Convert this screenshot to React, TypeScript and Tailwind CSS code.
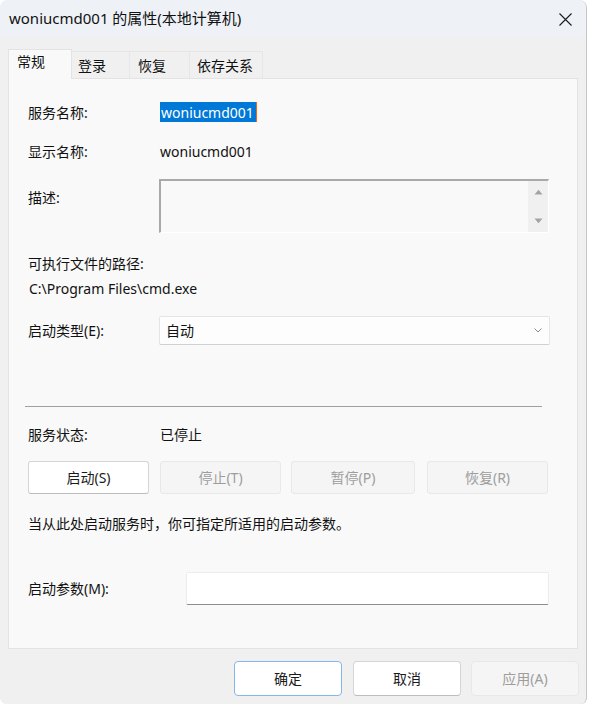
import React from "react";

const font = { fontFamily: '"Noto Sans", "Noto Sans CJK SC", sans-serif' };

function Row({ label, children, className = "" }: { label: string; children?: React.ReactNode; className?: string }) {
  return (
    <div className={`flex items-center ${className}`}>
      <div className="w-[132px] shrink-0">{label}</div>
      {children}
    </div>
  );
}

function ActionButton({ label, enabled, w, className = "" }: { label: string; enabled?: boolean; w: string; className?: string }) {
  return (
    <div
      className={`${w} h-[33px] flex items-center justify-center rounded-[3px] border ${
        enabled
          ? "bg-white border-[#d5d5d5] border-b-[#bdbdbd] text-[#1a1a1a]"
          : "bg-[#f5f5f5] border-[#e8e8e8] text-[#9d9d9d]"
      } ${className}`}
    >
      {label}
    </div>
  );
}

export default function App() {
  return (
    <div className="w-[589px] h-[705px] bg-white text-[14px] text-[#111]" style={font}>
      <div className="w-[587px] h-[704px] flex flex-col rounded-t-[8px] rounded-b-[6px] overflow-hidden border-r border-[#c6c6c6] bg-[#f0f0f0]">
        {/* Title bar */}
        <div className="h-[37px] shrink-0 bg-[#eef2f7] flex items-center pl-[9px] pr-[14px]">
          <div className="flex-1 text-[15px] text-[#111] -mt-[1px]">woniucmd001 的属性(本地计算机)</div>
          <svg width="13" height="13" viewBox="0 0 13 13" className="mt-[1px]">
            <path d="M0.5 0.5 L12.5 12.5 M12.5 0.5 L0.5 12.5" stroke="#1a1a1a" strokeWidth="1.1" fill="none" />
          </svg>
        </div>

        {/* Tabs */}
        <div className="flex items-end ml-[8px] mt-[12px] h-[29px]">
          <div className="w-[64px] h-[30px] bg-[#f9f9f9] border border-b-0 border-[#e3e3e3] pl-[8px] pt-[1px] relative z-10 -mb-px">
            常规
          </div>
          <div className="w-[58px] h-[27px] border-t border-r border-[#e6e6e6] pl-[6px] pt-[3px]">登录</div>
          <div className="w-[60px] h-[27px] border-t border-r border-[#e6e6e6] pl-[8px] pt-[3px]">恢复</div>
          <div className="w-[73px] h-[27px] border-t border-r border-[#e6e6e6] pl-[7px] pt-[3px]">依存关系</div>
        </div>

        {/* Panel */}
        <div className="ml-[8px] w-[570px] h-[571px] bg-[#f9f9f9] border border-[#e3e3e3] pl-[19px] pt-[23px] flex flex-col">
          <Row label="服务名称:" className="h-[20px]">
            <div className="relative flex items-center h-[20px] bg-[#0078d7] text-white pl-[1px] pr-[3px]">
              woniucmd001
              <div className="absolute right-0 top-0 w-px h-[20px] bg-[#f7630c]" />
            </div>
          </Row>
          <Row label="显示名称:" className="h-[20px] mt-[19px]">
            <div>woniucmd001</div>
          </Row>
          <div className="flex mt-[18px] h-[54px]">
            <div className="w-[131px] shrink-0 mt-[8px]">描述:</div>
            <div className="w-[390px] h-[54px] flex border-t-2 border-l-2 border-t-[#a9a9a9] border-l-[#a9a9a9] border-b border-r border-b-white border-r-white">
              <div className="flex-1" />
              <div className="w-[20px] bg-[#f0f0f0] flex flex-col items-center justify-between pt-[8px] pb-[8px]">
                <svg width="9" height="6" viewBox="0 0 9 6">
                  <path d="M0.5 5.5 L4.5 0.8 L8.5 5.5 Z" fill="#a3a3a3" />
                </svg>
                <svg width="9" height="6" viewBox="0 0 9 6">
                  <path d="M0.5 0.5 L4.5 5.2 L8.5 0.5 Z" fill="#a3a3a3" />
                </svg>
              </div>
            </div>
          </div>
          <div className="h-[20px] mt-[20px] flex items-center">可执行文件的路径:</div>
          <div className="h-[20px] mt-[5px] flex items-center pl-[1px]">C:\Program Files\cmd.exe</div>
          <div className="flex items-center mt-[18px] h-[29px]">
            <div className="w-[131px] shrink-0">启动类型(E):</div>
            <div className="w-[391px] h-[29px] bg-[#fdfdfd] border border-[#e5e5e5] border-b-[#d0d0d0] rounded-[2px] flex items-center pl-[6px] pr-[7px]">
              <div className="flex-1">自动</div>
              <svg width="8" height="5" viewBox="0 0 8 5">
                <path d="M0.5 0.5 L4 4 L7.5 0.5" stroke="#8a8a8a" strokeWidth="1" fill="none" />
              </svg>
            </div>
          </div>
          <div className="mt-[61px] -ml-[3px] w-[517px] h-px bg-[#a0a0a0]" />
          <Row label="服务状态:" className="h-[20px] mt-[17px]">
            <div>已停止</div>
          </Row>
          <div className="flex mt-[17px]">
            <ActionButton label="启动(S)" enabled w="w-[121px]" />
            <ActionButton label="停止(T)" w="w-[121px]" className="ml-[11px]" />
            <ActionButton label="暂停(P)" w="w-[124px]" className="ml-[10px]" />
            <ActionButton label="恢复(R)" w="w-[121px]" className="ml-[12px]" />
          </div>
          <div className="h-[20px] mt-[19px] flex items-center">当从此处启动服务时，你可指定所适用的启动参数。</div>
          <div className="flex items-center mt-[39px] h-[33px]">
            <div className="w-[158px] shrink-0">启动参数(M):</div>
            <div className="w-[363px] h-[33px] bg-white border border-[#ececec] border-b-[#8d8d8d] rounded-[2px]" />
          </div>
        </div>

        {/* Footer buttons */}
        <div className="flex mt-[12px] ml-[234px]">
          <div className="w-[108px] h-[35px] flex items-center justify-center rounded-[4px] bg-white border border-[#86b6e6] text-[#1a1a1a]">
            确定
          </div>
          <div className="w-[108px] h-[35px] ml-[11px] flex items-center justify-center rounded-[4px] bg-white border border-[#d5d5d5] border-b-[#bdbdbd] text-[#1a1a1a]">
            取消
          </div>
          <div className="w-[108px] h-[35px] ml-[10px] flex items-center justify-center rounded-[4px] bg-[#f5f5f5] border border-[#e8e8e8] text-[#9d9d9d]">
            应用(A)
          </div>
        </div>
      </div>
    </div>
  );
}
